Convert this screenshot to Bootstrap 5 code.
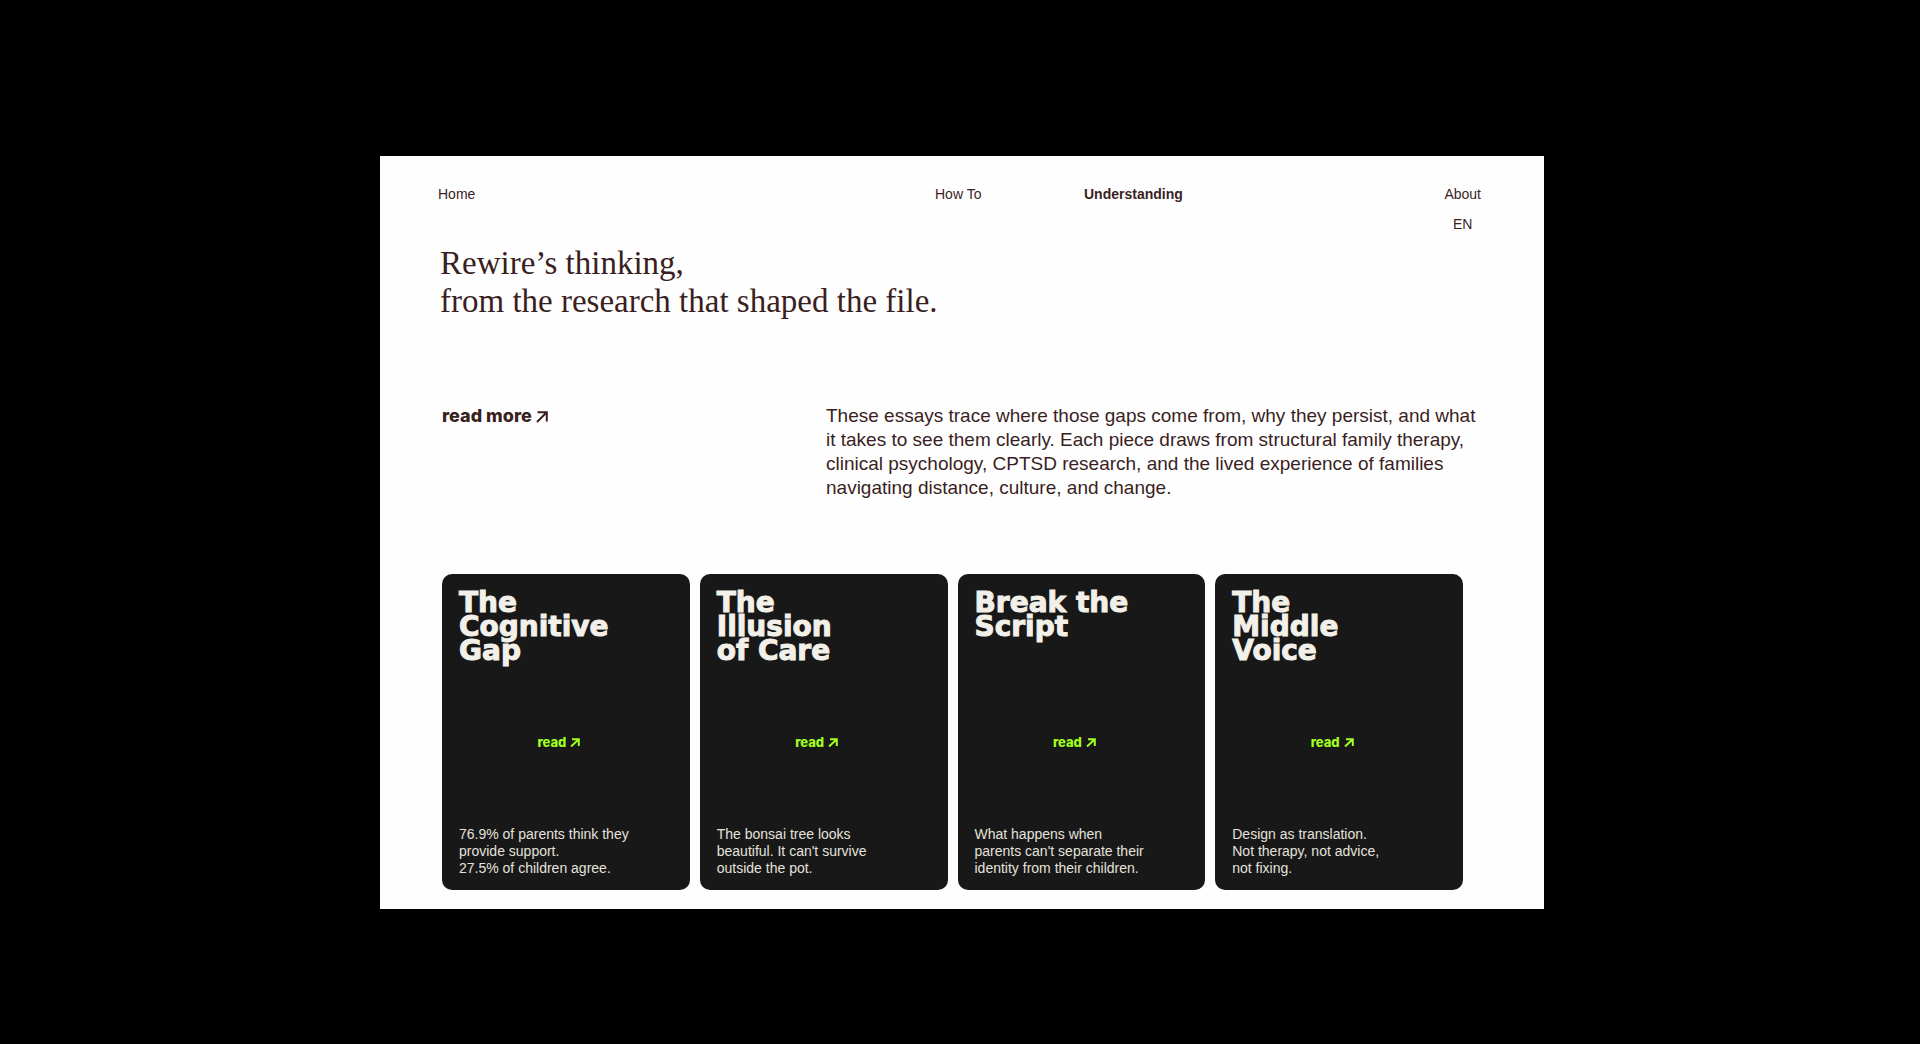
<!DOCTYPE html>
<html lang="en">
<head>
<meta charset="utf-8">
<meta name="viewport" content="width=device-width, initial-scale=1">
<title>Rewire – Understanding</title>
<link href="https://cdn.jsdelivr.net/npm/bootstrap@5.3.0/dist/css/bootstrap.min.css" rel="stylesheet">
<style>
  body { background: #000; color: #3a1f1f; font-family: "Liberation Sans", Arial, sans-serif; }
  a { color: inherit; text-decoration: none; }
  .stage { padding: 156px 376px 132px 380px; }
  .sheet { background: #fefefe; padding: 28px 62px 19px 58px; }
  .topnav { display: grid; grid-template-columns: 497fr 149fr 397fr; font-size: 14px; line-height: 20px; padding-right: 1px; }
  .topnav .lang { margin-top: 10px; }
  .headline { font-family: "Liberation Serif", serif; font-size: 33px; line-height: 38px; font-weight: 400; margin: 10px 0 0; padding-left: 2px; }
  .intro { display: grid; grid-template-columns: 388fr 656fr; margin-top: 84px; font-size: 19px; line-height: 24px; }
  .more { padding-left: 4px; font-family: Inter, sans-serif; font-weight: 800; font-size: 18px; }
  .essays { margin: 74px 19px 0 4px; gap: 10px; }
  .essay { flex: 1 1 0; min-width: 0; min-height: 316px; background: #181818; color: #e4e2dc; border-radius: 10px; padding: 17px 17px 13px; }
  .essay h2 { font-family: "DejaVu Sans", sans-serif; font-size: 28px; line-height: 24px; font-weight: 700; color: #f2f0e9; -webkit-text-stroke: 1px #f2f0e9; margin: 0; min-height: 72px; }
  .essay .go { color: #a0ff1e; font-family: Inter, sans-serif; font-weight: 800; font-size: 13px; line-height: 20px; margin: 0 14px 6px 0; }
  .essay p { font-size: 14px; line-height: 17px; margin: 0; white-space: nowrap; }
  .arrow { fill: none; stroke: currentColor; }
</style>
<script src="https://cdn.jsdelivr.net/npm/bootstrap@5.3.0/dist/js/bootstrap.bundle.min.js" defer></script>
</head>
<body>
<div class="stage">
  <main class="sheet">
    <nav class="topnav" aria-label="Main">
      <div><a href="#">Home</a></div>
      <div><a href="#">How To</a></div>
      <div class="d-flex justify-content-between align-items-start">
        <a href="#" class="fw-bold" aria-current="page">Understanding</a>
        <div class="d-flex flex-column align-items-center">
          <a href="#">About</a>
          <a href="#" class="lang">EN</a>
        </div>
      </div>
    </nav>
    <h1 class="headline">Rewire’s thinking,<br>from the research that shaped the file.</h1>
    <section class="intro">
      <div class="more"><a href="#">read more<svg class="arrow ms-1" width="12" height="12" viewBox="0 0 12 12" stroke-width="2" aria-hidden="true"><path d="M1 11 10.5 1.5M1.5 1.2H10.8V10.5"/></svg></a></div>
      <p class="m-0">These essays trace where those gaps come from, why they persist, and what it takes to see them clearly. Each piece draws from structural family therapy, clinical psychology, CPTSD research, and the lived experience of families navigating distance, culture, and change.</p>
    </section>
    <section class="essays d-flex">
      <article class="essay d-flex flex-column justify-content-between">
        <h2>The<br>Cognitive<br>Gap</h2>
        <a href="#" class="go align-self-center">read<svg class="arrow ms-1" width="10" height="9" viewBox="0 0 10 9" stroke-width="2" aria-hidden="true"><path d="M1 8.5 8 2M2 1.2H8.8V8"/></svg></a>
        <p>76.9% of parents think they<br>provide support.<br>27.5% of children agree.</p>
      </article>
      <article class="essay d-flex flex-column justify-content-between">
        <h2>The<br>Illusion<br>of Care</h2>
        <a href="#" class="go align-self-center">read<svg class="arrow ms-1" width="10" height="9" viewBox="0 0 10 9" stroke-width="2" aria-hidden="true"><path d="M1 8.5 8 2M2 1.2H8.8V8"/></svg></a>
        <p>The bonsai tree looks<br>beautiful. It can't survive<br>outside the pot.</p>
      </article>
      <article class="essay d-flex flex-column justify-content-between">
        <h2>Break the<br>Script</h2>
        <a href="#" class="go align-self-center">read<svg class="arrow ms-1" width="10" height="9" viewBox="0 0 10 9" stroke-width="2" aria-hidden="true"><path d="M1 8.5 8 2M2 1.2H8.8V8"/></svg></a>
        <p>What happens when<br>parents can't separate their<br>identity from their children.</p>
      </article>
      <article class="essay d-flex flex-column justify-content-between">
        <h2>The<br>Middle<br>Voice</h2>
        <a href="#" class="go align-self-center">read<svg class="arrow ms-1" width="10" height="9" viewBox="0 0 10 9" stroke-width="2" aria-hidden="true"><path d="M1 8.5 8 2M2 1.2H8.8V8"/></svg></a>
        <p>Design as translation.<br>Not therapy, not advice,<br>not fixing.</p>
      </article>
    </section>
  </main>
</div>
</body>
</html>
